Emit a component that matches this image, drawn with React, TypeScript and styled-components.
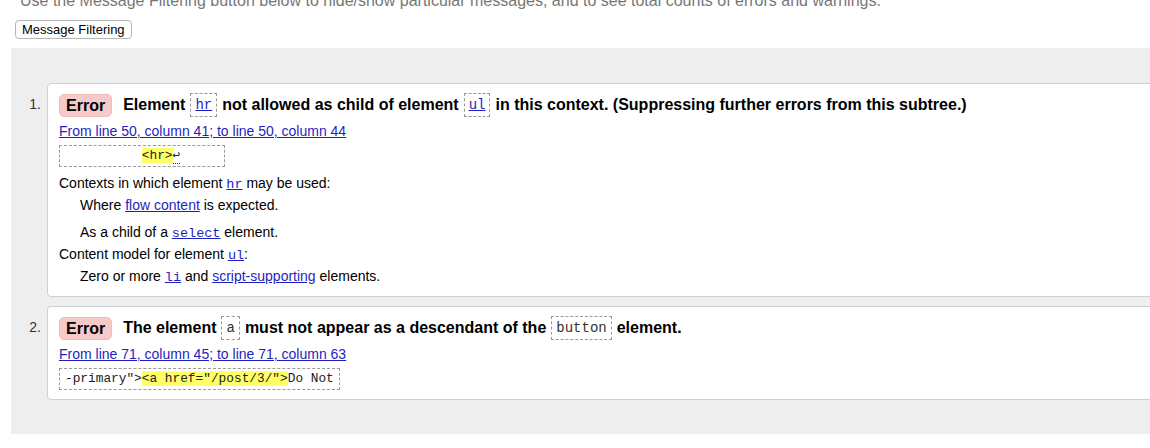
import React from "react";
import styled, { createGlobalStyle } from "styled-components";

const GlobalStyle = createGlobalStyle`
  html, body {
    margin: 0;
    padding: 0;
    overflow: hidden;
    background: #fff;
  }
  body {
    font-family: "Liberation Sans", Arial, sans-serif;
    color: #000;
  }
`;

type Extract = { before: string; mark: string; after: string };

type Message = {
  parts: React.ReactNode;
  location: string;
  extract: Extract;
  details?: React.ReactNode;
};

const Page = styled.div`
  width: 1150px;
  height: 448px;
  overflow: hidden;
`;

const Intro = styled.p`
  margin: -8px 0 0 20px;
  font-size: 16px;
  line-height: 18px;
  color: #777;
  white-space: nowrap;
`;

const FilterButton = styled.button`
  display: block;
  margin: 10px 0 0 15px;
  height: 19px;
  padding: 0 6px;
  font-family: "Liberation Sans", Arial, sans-serif;
  font-size: 13px;
  line-height: 17px;
  color: #000;
  background: #fff;
  border: 1px solid #b5b5b5;
  border-radius: 4px;
`;

const Panel = styled.ol`
  list-style: none;
  margin: 9px -60px 0 11px;
  padding: 35px 20px 34px 0;
  background: #eeeeee;
  display: flex;
  flex-direction: column;
  gap: 9px;
`;

const Item = styled.li`
  display: grid;
  grid-template-columns: 36px 1fr;
`;

const Num = styled.span`
  padding-top: 13px;
  padding-right: 6px;
  text-align: right;
  font-size: 14px;
  line-height: 16px;
  color: #333;
`;

const Card = styled.div`
  background: #fff;
  border: 1px solid #cfcfcf;
  border-radius: 4px;
  padding: 9px 12px 9px 11px;
`;

const Headline = styled.p`
  margin: 0;
  display: flex;
  align-items: center;
  flex-wrap: nowrap;
  white-space: pre;
  font-size: 16px;
  font-weight: bold;
  line-height: 24px;
`;

const Badge = styled.strong`
  display: inline-block;
  margin-right: 11px;
  padding: 0 6px;
  height: 21px;
  line-height: 21px;
  background: #f8c9c9;
  border: 1px solid #f1bcbc;
  border-radius: 5px;
`;

const CodeBox = styled.code<{ $link?: boolean }>`
  display: inline-block;
  margin: 0 5px;
  padding: 0 4px;
  height: 22px;
  line-height: 22px;
  border: 1px dashed #999;
  font-family: "Liberation Mono", "DejaVu Sans Mono", monospace;
  font-size: 14px;
  font-weight: normal;
  color: ${(p) => (p.$link ? "#1f1fbf" : "#333")};
  text-decoration: ${(p) => (p.$link ? "underline" : "none")};
`;

const Location = styled.a`
  display: block;
  margin-top: 6px;
  font-size: 14px;
  line-height: 17px;
  color: #1f1fbf;
  text-decoration: underline;
`;

const ExtractBox = styled.code`
  display: inline-block;
  margin-top: 5px;
  padding: 0 5px;
  height: 20px;
  line-height: 20px;
  border: 1px dashed #999;
  font-family: "Liberation Mono", "DejaVu Sans Mono", monospace;
  font-size: 12.8px;
  color: #222;
  white-space: pre;
`;

const Mark = styled.mark`
  background: #ffff66;
  color: #222;
`;

const Return = styled.span`
  border-bottom: 1px dotted #333;
`;

const Details = styled.dl`
  margin: 5px 0 0;
  font-size: 14px;
  line-height: 22px;
  color: #000;
`;

const Term = styled.dt`
  margin: 0;
`;

const Def = styled.dd<{ $spaced?: boolean }>`
  margin: ${(p) => (p.$spaced ? "5px" : "0")} 0 0 21px;
`;

const Link = styled.a`
  color: #1f1fbf;
  text-decoration: underline;
`;

const CodeLink = styled.a`
  font-family: "Liberation Mono", "DejaVu Sans Mono", monospace;
  font-size: 13.5px;
  line-height: 0;
  color: #1f1fbf;
  text-decoration: underline;
`;

const messages: Message[] = [
  {
    parts: (
      <>
        Element<CodeBox $link>hr</CodeBox>not allowed as child of element
        <CodeBox $link>ul</CodeBox>in this context. (Suppressing further errors from this subtree.)
      </>
    ),
    location: "From line 50, column 41; to line 50, column 44",
    extract: { before: "          ", mark: "<hr>", after: "     " },
    details: (
      <Details>
        <Term>
          Contexts in which element <CodeLink>hr</CodeLink> may be used:
        </Term>
        <Def>
          Where <Link>flow content</Link> is expected.
        </Def>
        <Def $spaced>
          As a child of a <CodeLink>select</CodeLink> element.
        </Def>
        <Term>
          Content model for element <CodeLink>ul</CodeLink>:
        </Term>
        <Def>
          Zero or more <CodeLink>li</CodeLink> and <Link>script-supporting</Link> elements.
        </Def>
      </Details>
    ),
  },
  {
    parts: (
      <>
        The element<CodeBox>a</CodeBox>must not appear as a descendant of the
        <CodeBox>button</CodeBox>element.
      </>
    ),
    location: "From line 71, column 45; to line 71, column 63",
    extract: { before: '-primary">', mark: '<a href="/post/3/">', after: "Do Not" },
  },
];

export default function App() {
  return (
    <Page>
      <GlobalStyle />
      <Intro>
        Use the Message Filtering button below to hide/show particular messages, and to see total
        counts of errors and warnings.
      </Intro>
      <FilterButton>Message Filtering</FilterButton>
      <Panel>
        {messages.map((m, i) => (
          <Item key={i}>
            <Num>{i + 1}.</Num>
            <Card>
              <Headline>
                <Badge>Error</Badge>
                {m.parts}
              </Headline>
              <Location>{m.location}</Location>
              <ExtractBox>
                {m.extract.before}
                <Mark>{m.extract.mark}</Mark>
                {i === 0 ? <Return>↩</Return> : null}
                {m.extract.after}
              </ExtractBox>
              {m.details}
            </Card>
          </Item>
        ))}
      </Panel>
    </Page>
  );
}
